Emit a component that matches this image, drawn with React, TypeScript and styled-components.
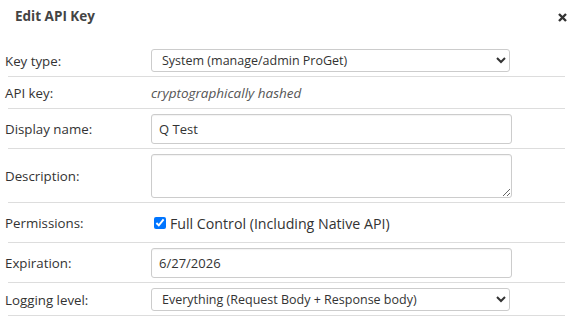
import React from 'react';
import styled, { createGlobalStyle } from 'styled-components';

const GlobalStyle = createGlobalStyle`
  body {
    margin: 0;
    background: #fff;
    font-family: 'Open Sans', 'Noto Sans', sans-serif;
    color: #333;
  }
`;

const Dialog = styled.div`
  width: 576px;
  height: 329px;
  background: #fff;
`;

const Header = styled.div`
  height: 44px;
  display: flex;
  align-items: flex-start;
  justify-content: space-between;
  padding: 6px 9px 0 15px;
  box-sizing: border-box;
`;

const Title = styled.h3`
  margin: 0;
  font-size: 13.5px;
  font-weight: 700;
  color: #444;
  line-height: 20px;
`;

const CloseButton = styled.button`
  border: 0;
  background: none;
  padding: 0;
  margin-top: 7px;
  width: 9px;
  height: 9px;
  display: flex;
  cursor: pointer;
`;

const Form = styled.div`
  margin: 0 11px 0 8px;
`;

const Row = styled.div`
  display: grid;
  grid-template-columns: 143px 1fr;
  align-items: center;
  padding: 5px 0 4px;
  border-bottom: 1px solid #ddd;
`;

const Label = styled.label`
  margin-left: -3px;
  font-size: 13.3px;
  color: #333;
`;

const Value = styled.div<{ $minHeight?: number }>`
  display: flex;
  align-items: center;
  min-height: ${(p) => p.$minHeight ?? 22}px;
  font-size: 13px;
`;

const Muted = styled.span`
  font-style: italic;
  font-size: 13.5px;
  color: #555;
`;

const Select = styled.select`
  width: 359px;
  height: 23px;
  border: 1px solid #ccc;
  border-radius: 3px;
  background: #fff;
  padding: 0 6px;
  font-family: inherit;
  font-size: 12.5px;
  color: #333;
`;

const TextInput = styled.input`
  width: 361px;
  height: 30px;
  box-sizing: border-box;
  border: 1px solid #ccc;
  border-radius: 3px;
  padding: 0 7px;
  font-family: inherit;
  font-size: 13px;
  color: #333;
  box-shadow: inset 0 1px 1px rgba(0, 0, 0, 0.05);
`;

const TextArea = styled.textarea`
  width: 361px;
  height: 44px;
  box-sizing: border-box;
  border: 1px solid #ccc;
  border-radius: 3px;
  padding: 5px 7px;
  font-family: inherit;
  font-size: 13px;
  box-shadow: inset 0 1px 1px rgba(0, 0, 0, 0.05);
`;

const CheckLabel = styled.label`
  display: flex;
  align-items: center;
  gap: 4px;
  font-size: 14.2px;
  color: #333;
  margin-left: 3px;

  input {
    margin: 0;
    width: 12px;
    height: 12px;
  }
`;

export default function App() {
  return (
    <Dialog>
      <GlobalStyle />
      <Header>
        <Title>Edit API Key</Title>
        <CloseButton aria-label="Close">
          <svg width="9" height="9" viewBox="0 0 9 9">
            <path d="M1 1L8 8M8 1L1 8" stroke="#333" strokeWidth="2.4" strokeLinecap="butt" />
          </svg>
        </CloseButton>
      </Header>
      <Form>
        <Row>
          <Label>Key type:</Label>
          <Value>
            <Select defaultValue="system">
              <option value="system">System (manage/admin ProGet)</option>
            </Select>
          </Value>
        </Row>
        <Row>
          <Label>API key:</Label>
          <Value>
            <Muted>cryptographically hashed</Muted>
          </Value>
        </Row>
        <Row>
          <Label>Display name:</Label>
          <Value>
            <TextInput defaultValue="Q Test" />
          </Value>
        </Row>
        <Row>
          <Label>Description:</Label>
          <Value>
            <TextArea />
          </Value>
        </Row>
        <Row>
          <Label>Permissions:</Label>
          <Value $minHeight={30}>
            <CheckLabel>
              <input type="checkbox" defaultChecked />
              Full Control (Including Native API)
            </CheckLabel>
          </Value>
        </Row>
        <Row>
          <Label>Expiration:</Label>
          <Value>
            <TextInput defaultValue="6/27/2026" />
          </Value>
        </Row>
        <Row>
          <Label>Logging level:</Label>
          <Value>
            <Select defaultValue="all">
              <option value="all">Everything (Request Body + Response body)</option>
            </Select>
          </Value>
        </Row>
      </Form>
    </Dialog>
  );
}
